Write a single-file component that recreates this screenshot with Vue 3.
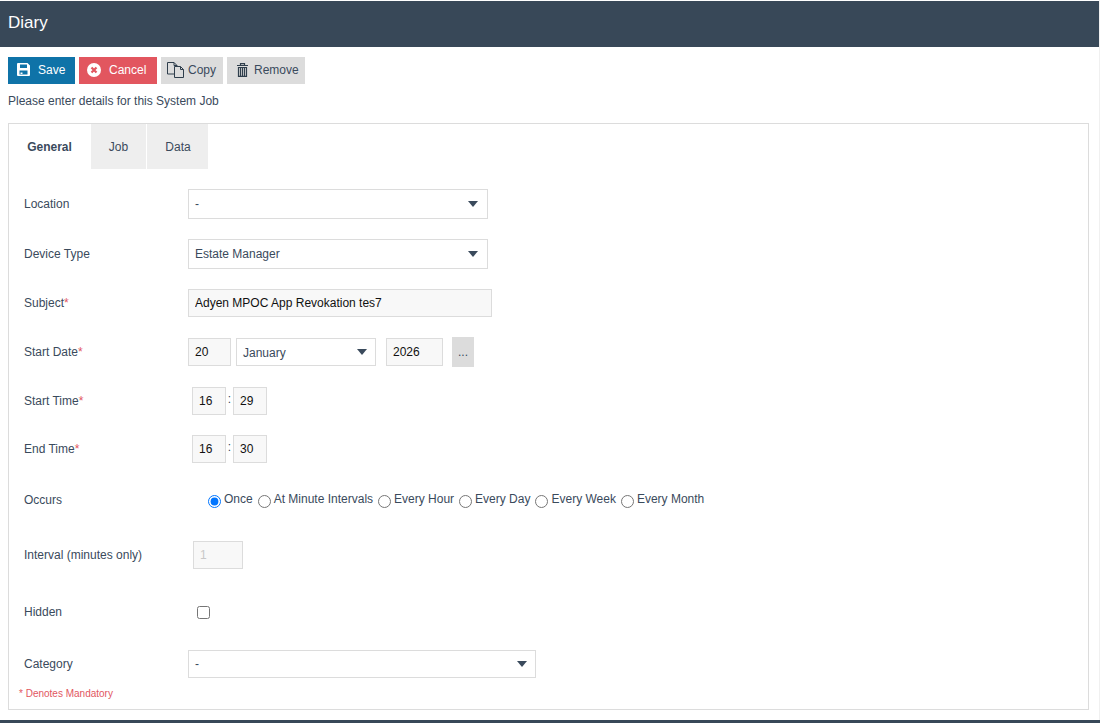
<template>
  <div class="page">
    <header class="title-bar">Diary</header>

    <div class="toolbar">
      <button class="btn btn-save">
        <svg width="13" height="13" viewBox="0 0 13 13">
          <path fill="#fff" fill-rule="evenodd" d="M1 0h9.500L13 2.500V12a1 1 0 0 1-1 1H1a1 1 0 0 1-1-1V1a1 1 0 0 1 1-1zm2 1.500V5h7V1.500zM2.500 7.500v4h8v-4z" />
          <rect x="3.500" y="9.500" width="2" height="1.500" fill="#fff" />
        </svg>
        Save
      </button>
      <button class="btn btn-cancel">
        <svg width="14" height="14" viewBox="0 0 14 14">
          <circle cx="7" cy="7" r="7" fill="#fff" />
          <path d="M4.500 4.500l5 5M9.500 4.500l-5 5" stroke="#e2565f" stroke-width="2.200" />
        </svg>
        Cancel
      </button>
      <button class="btn btn-grey btn-copy">
        <svg width="17" height="17" viewBox="0 0 17 17" fill="none" stroke="#2f3e4c" stroke-width="1">
          <path d="M10 5.500v-1l-3-3H.5V13h7" />
          <path d="M7 1.500v3h3" />
          <path d="M7.500 5.500h6l3 3v8h-9z" />
          <path d="M13.500 5.500v3h3" />
        </svg>
        Copy
      </button>
      <button class="btn btn-grey btn-remove">
        <svg width="11" height="14" viewBox="0 0 11 14" fill="none" stroke="#2f3e4c" stroke-width="1.200">
          <path d="M0 2.500h11M3.500 2.500V.6h4v1.900" />
          <path d="M1.500 4.500h8v8.900h-8z" />
          <path d="M3.500 5v8M5.500 5v8M7.500 5v8" />
        </svg>
        Remove
      </button>
    </div>

    <p class="intro">Please enter details for this System Job</p>

    <section class="panel">
      <nav class="tabs">
        <a class="tab active">General</a>
        <a class="tab">Job</a>
        <a class="tab">Data</a>
      </nav>

      <form class="form" @submit.prevent>
        <div class="row row-location">
          <label>Location</label>
          <div class="select w300">-</div>
        </div>
        <div class="row row-device">
          <label>Device Type</label>
          <div class="select w300">Estate Manager</div>
        </div>
        <div class="row row-subject">
          <label>Subject<em>*</em></label>
          <input class="input subject" v-model="subject" />
        </div>
        <div class="row row-date">
          <label>Start Date<em>*</em></label>
          <input class="input day" value="20" />
          <div class="select month">January</div>
          <input class="input year" value="2026" />
          <button class="dots" type="button">...</button>
        </div>
        <div class="row row-start">
          <label>Start Time<em>*</em></label>
          <div class="time">
            <input class="input hh" value="16" /><span class="colon">:</span><input class="input hh" value="29" />
          </div>
        </div>
        <div class="row row-end">
          <label>End Time<em>*</em></label>
          <div class="time">
            <input class="input hh" value="16" /><span class="colon">:</span><input class="input hh" value="30" />
          </div>
        </div>
        <div class="row row-occurs">
          <label>Occurs</label>
          <div class="radios">
            <label v-for="o in occurs" :key="o" class="radio">
              <input type="radio" name="occurs" :value="o" v-model="picked" />{{ o }}
            </label>
          </div>
        </div>
        <div class="row row-interval">
          <label>Interval (minutes only)</label>
          <input class="input interval" value="1" disabled />
        </div>
        <div class="row row-hidden">
          <label>Hidden</label>
          <input class="check" type="checkbox" />
        </div>
        <div class="row row-category">
          <label>Category</label>
          <div class="select w348">-</div>
        </div>
        <p class="mandatory">* Denotes Mandatory</p>
      </form>
    </section>

    <footer class="foot"></footer>
  </div>
</template>

<script setup>
import { ref } from 'vue'

const subject = ref('Adyen MPOC App Revokation tes7')
const occurs = ['Once', 'At Minute Intervals', 'Every Hour', 'Every Day', 'Every Week', 'Every Month']
const picked = ref('Once')
</script>

<style>
html,
body {
  margin: 0;
  background: #fff;
  overflow: hidden;
}
</style>

<style scoped>
.page {
  width: 1100px;
  height: 723px;
  padding-top: 1px;
  box-sizing: border-box;
  border-right: 1px solid #f0f0f0;
  font-family: "Liberation Sans", Arial, sans-serif;
  font-size: 12px;
  color: #3a4a5c;
  position: relative;
}

.title-bar {
  height: 46px;
  background: #384858;
  color: #fff;
  font-size: 17px;
  line-height: 44px;
  padding-left: 8px;
}

.toolbar {
  display: flex;
  gap: 4px;
  padding: 10px 0 0 8px;
}

.btn {
  height: 27px;
  border: 0;
  padding: 0 0 2px;
  display: flex;
  align-items: center;
  font: inherit;
}

.btn-save {
  width: 67px;
  gap: 8px;
  padding-left: 9px;
  background: #0f73a8;
  color: #fff;
}

.btn-cancel {
  width: 78px;
  gap: 8px;
  padding-left: 8px;
  background: #e2565f;
  color: #fff;
}

.btn-grey {
  background: #dcdcdc;
  color: #3a4a5c;
}

.btn-copy {
  width: 62px;
  gap: 4px;
  padding-left: 6px;
}

.btn-remove {
  width: 78px;
  gap: 6px;
  padding-left: 10px;
}

.intro {
  margin: 10px 0 0 8px;
  line-height: 14px;
}

.panel {
  margin: 15px 0 0 8px;
  width: 1081px;
  height: 587px;
  box-sizing: border-box;
  border: 1px solid #dcdcdc;
}

.tabs {
  display: flex;
  gap: 1px;
}

.tab {
  box-sizing: border-box;
  height: 45px;
  line-height: 47px;
  text-align: center;
  background: #eee;
  width: 55px;
}

.tab + .tab + .tab {
  width: 61px;
  padding-left: 1px;
}

.tab.active {
  width: 81px;
  background: #fff;
  font-weight: 700;
}

.form {
  padding: 0 0 0 15px;
}

.row {
  display: flex;
  align-items: center;
}

.row > label {
  width: 164px;
  flex: none;
}

.row > label em {
  color: #e2565f;
  font-style: normal;
}

.select {
  box-sizing: border-box;
  border: 1px solid #dcdcdc;
  background: #fff;
  padding-left: 6px;
  height: 30px;
  line-height: 28px;
  position: relative;
}

.select::after {
  content: "";
  position: absolute;
  right: 9px;
  top: 50%;
  margin-top: -3px;
  border-left: 5px solid transparent;
  border-right: 5px solid transparent;
  border-top: 6px solid #3a4a5c;
}

.month::after,
.w348::after {
  right: 8px;
}

.w300 {
  width: 300px;
}

.w348 {
  width: 348px;
  height: 28px;
  line-height: 26px;
}

.input {
  box-sizing: border-box;
  border: 1px solid #dcdcdc;
  background: #f8f8f8;
  font: inherit;
  color: #111;
  padding: 0 6px;
  height: 28px;
  outline: none;
}

.row-location {
  margin-top: 20px;
}

.row-device {
  margin-top: 20px;
}

.row-subject {
  margin-top: 20px;
}

.subject {
  width: 304px;
}

.row-date {
  margin-top: 20px;
  height: 30px;
}

.day {
  width: 43px;
}

.month {
  width: 140px;
  height: 28px;
  line-height: 28px;
  margin-left: 5px;
}

.year {
  width: 57px;
  margin-left: 10px;
}

.dots {
  width: 22px;
  height: 30px;
  margin-left: 9px;
  border: 0;
  padding: 0;
  background: #dcdcdc;
  color: #3a4a5c;
  font: inherit;
}

.row-start {
  margin-top: 20px;
}

.row-end {
  margin-top: 20px;
}

.time {
  display: flex;
  margin-left: 4px;
}

.hh {
  width: 34px;
  text-align: left;
}

.colon {
  width: 7px;
  text-align: center;
  line-height: 24px;
  height: 28px;
}

.row-occurs {
  margin-top: 27px;
  height: 20px;
}

.radios {
  display: flex;
  margin: -2px 0 0 19px;
}

.radio {
  display: flex;
  align-items: center;
  margin-right: 4px;
}

.radio input {
  width: 13px;
  height: 13px;
  margin: 4px 3px 0 1px;
}

.row-interval {
  margin-top: 31px;
}

.interval {
  width: 50px;
  margin-left: 5px;
  color: #c8c8c8;
}

.row-hidden {
  margin-top: 29px;
  height: 28px;
}

.check {
  width: 13px;
  height: 13px;
  margin: 0 0 0 9px;
}

.row-category {
  margin-top: 24px;
}

.mandatory {
  margin: 10px 0 0 -5px;
  font-size: 10px;
  line-height: 12px;
  color: #e2565f;
}

.foot {
  position: absolute;
  left: 0;
  right: -1px;
  bottom: 0;
  height: 3px;
  background: #384858;
}
</style>
